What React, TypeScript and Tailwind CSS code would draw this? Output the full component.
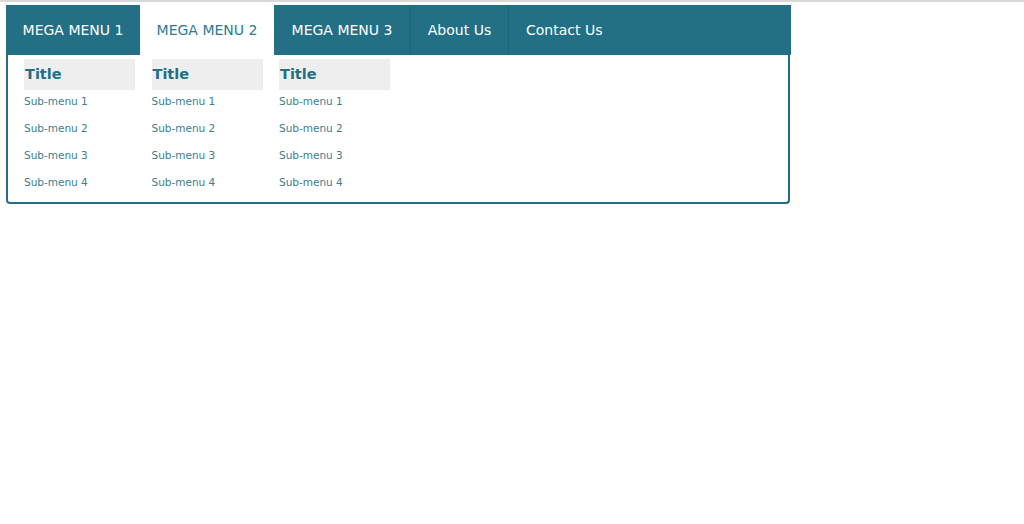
import React from "react";

const cols = [0, 1, 2];
const items = ["Sub-menu 1", "Sub-menu 2", "Sub-menu 3", "Sub-menu 4"];

export default function App() {
  return (
    <div
      className="w-[1024px] h-[524px] bg-white overflow-hidden"
      style={{ fontFamily: '"DejaVu Sans", Verdana, sans-serif' }}
    >
      <div className="h-[2px] bg-[#d8d8d8]" />
      <div className="pl-[6px] pt-[3px]">
        <nav className="flex w-[785px] h-[50px] bg-[#236f86] text-[14px] text-white whitespace-nowrap">
          <div className="flex items-center justify-center shrink-0 w-[134px]">MEGA MENU 1</div>
          <div className="flex items-center justify-center shrink-0 w-[134px] bg-white text-[#2e7a90]">MEGA MENU 2</div>
          <div className="flex items-center justify-center shrink-0 w-[137px] border-r border-[#1f6479]">MEGA MENU 3</div>
          <div className="flex items-center justify-center shrink-0 w-[98px] border-r border-[#1f6479]">About Us</div>
          <div className="flex items-center pl-[17px]">Contact Us</div>
        </nav>
        <div className="w-[784px] h-[149px] border-2 border-t-0 border-[#236f86] rounded-b-[4px] bg-white flex gap-[16.5px] pl-[16px] pt-[4px]">
          {cols.map((c) => (
            <div key={c} className="w-[111px] flex flex-col">
              <div className="h-[31px] bg-[#eeeeee] flex items-center pl-[1px] text-[14.5px] font-bold text-[#236f86]">
                Title
              </div>
              <ul className="flex flex-col -mt-[2px]">
                {items.map((it) => (
                  <li key={it} className="h-[27px] flex items-center text-[10.5px] text-[#3a7e8e] whitespace-nowrap">
                    {it}
                  </li>
                ))}
              </ul>
            </div>
          ))}
        </div>
      </div>
    </div>
  );
}
